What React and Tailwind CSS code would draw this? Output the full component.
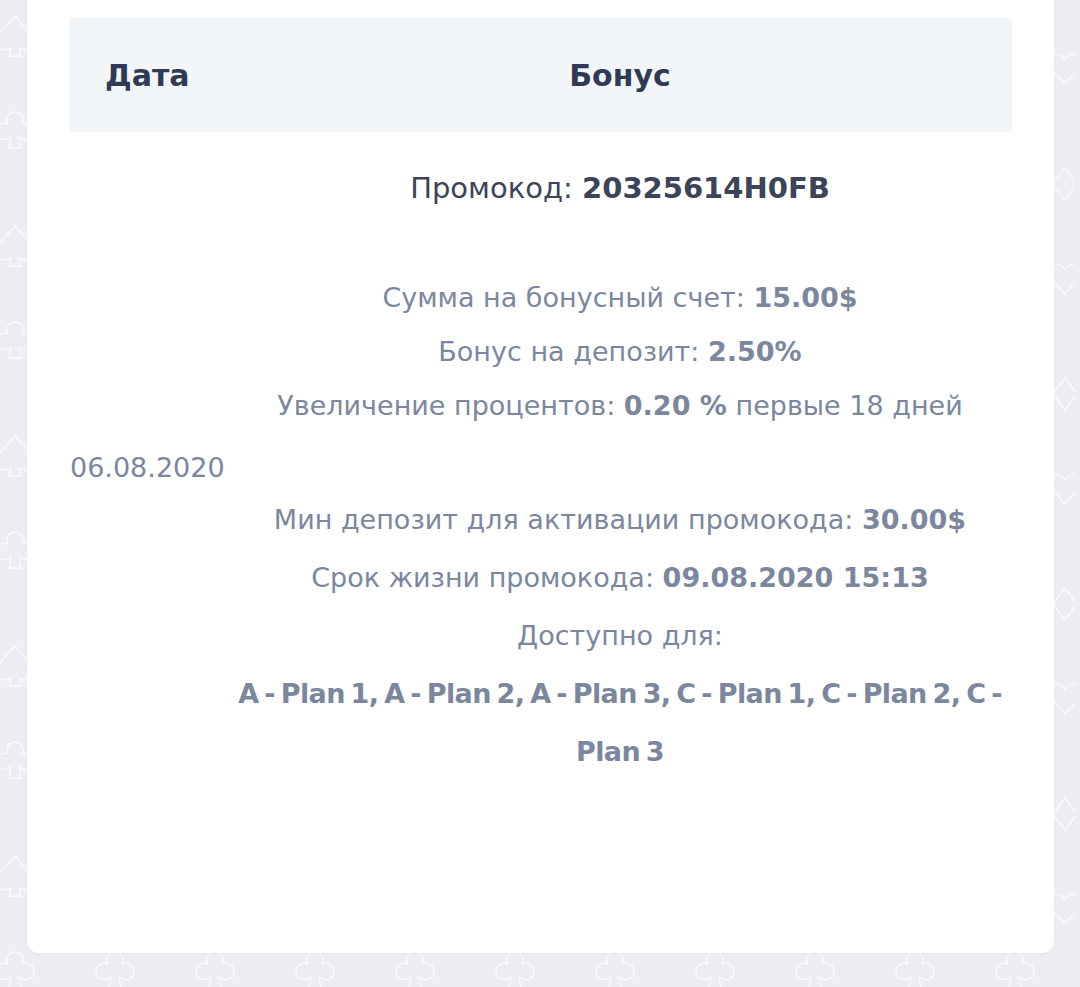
import React from "react";

function SuitPattern() {
  return (
    <svg className="absolute inset-0 h-full w-full" xmlns="http://www.w3.org/2000/svg">
      <defs>
        <pattern id="suits" x="-25" y="0" width="100" height="210" patternUnits="userSpaceOnUse">
          <g fill="none" stroke="#ffffff" strokeWidth="1.3" strokeLinejoin="round" strokeLinecap="round" opacity="0.75">
            {/* spade */}
            <path d="M40 16 C32 26 22 32 22 42 C22 49 29 52 36 48 L34 56 L46 56 L44 48 C51 52 58 49 58 42 C58 32 48 26 40 16 Z" />
            {/* club */}
            <path d="M40 112 C34 112 30 118 33 124 C27 121 21 126 21 132 C21 139 30 142 36 137 L34 148 L46 148 L44 137 C50 142 59 139 59 132 C59 126 53 121 47 124 C50 118 46 112 40 112 Z" />
            {/* heart */}
            <path d="M90 60 C86 52 74 52 74 62 C74 70 84 76 90 84 C96 76 106 70 106 62 C106 52 94 52 90 60 Z" />
            {/* diamond */}
            <path d="M90 168 L102 184 L90 200 L78 184 Z" />
          </g>
        </pattern>
      </defs>
      <rect width="100%" height="100%" fill="url(#suits)" />
    </svg>
  );
}

export default function App() {
  const body = "text-[#7b879e]";
  return (
    <div
      className="relative h-[987px] w-[1080px] overflow-hidden bg-[#eceef3]"
      style={{ fontFamily: "'DejaVu Sans', 'Open Sans', sans-serif" }}
    >
      <SuitPattern />
      <div className="relative mx-[27px] -mt-[20px] w-[1027px] rounded-b-[12px] bg-white pb-[149px] pl-[42px] pr-[42px] pt-[38px] shadow-[0_1px_3px_rgba(0,0,0,0.04)]">
        <table className="w-[943px] table-fixed border-collapse">
          <colgroup>
            <col className="w-[159px]" />
            <col className="w-[784px]" />
          </colgroup>
          <thead>
            <tr className="h-[114px] bg-[#f3f6f9]">
              <th className="pl-[36px] text-left text-[30px] font-bold text-[#2e3a56]">Дата</th>
              <th className="text-center text-[30px] font-bold text-[#2e3a56]">Бонус</th>
            </tr>
          </thead>
          <tbody>
            <tr>
              <td className={`align-middle pl-[1px] text-left text-[27px] ${body}`}>06.08.2020</td>
              <td className="pb-[23px] pt-[36px] text-center">
                <div className="text-[29px] leading-[40px] text-[#3b4459]">
                  Промокод: <span className="font-bold">20325614H0FB</span>
                </div>
                <div className={`mt-[63px] text-[27px] leading-[54px] ${body}`}>
                  <div>
                    Сумма на бонусный счет: <span className="font-bold">15.00$</span>
                  </div>
                  <div>
                    Бонус на депозит: <span className="font-bold">2.50%</span>
                  </div>
                  <div>
                    Увеличение процентов: <span className="font-bold">0.20 %</span> первые 18 дней
                  </div>
                </div>
                <div className={`mt-[58px] text-[27px] leading-[58px] ${body}`}>
                  <div>
                    Мин депозит для активации промокода: <span className="font-bold">30.00$</span>
                  </div>
                  <div>
                    Срок жизни промокода: <span className="font-bold">09.08.2020 15:13</span>
                  </div>
                  <div>Доступно для:</div>
                  <div className="font-bold tracking-[-0.6px] [word-spacing:-3px]">
                    A - Plan 1, A - Plan 2, A - Plan 3, C - Plan 1, C - Plan 2, C - Plan 3
                  </div>
                </div>
              </td>
            </tr>
          </tbody>
        </table>
      </div>
    </div>
  );
}
